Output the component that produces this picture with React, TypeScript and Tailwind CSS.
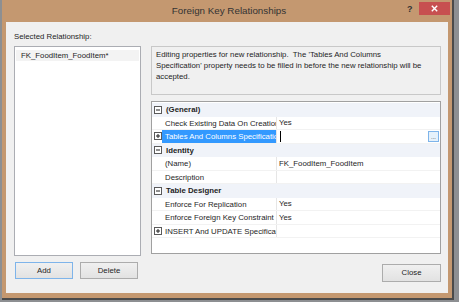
import React from 'react';

type Row =
  | { kind: 'cat'; label: string }
  | { kind: 'item'; label: string; value?: string; expand?: boolean; selected?: boolean; ellipsis?: boolean };

const rows: Row[] = [
  { kind: 'cat', label: '(General)' },
  { kind: 'item', label: 'Check Existing Data On Creation Or Re-Enabling', value: 'Yes' },
  { kind: 'item', label: 'Tables And Columns Specification', expand: true, selected: true, ellipsis: true },
  { kind: 'cat', label: 'Identity' },
  { kind: 'item', label: '(Name)', value: 'FK_FoodItem_FoodItem' },
  { kind: 'item', label: 'Description' },
  { kind: 'cat', label: 'Table Designer' },
  { kind: 'item', label: 'Enforce For Replication', value: 'Yes' },
  { kind: 'item', label: 'Enforce Foreign Key Constraint', value: 'Yes' },
  { kind: 'item', label: 'INSERT And UPDATE Specification', expand: true },
];

const Glyph: React.FC<{ open: boolean }> = ({ open }) => (
  <svg width="8" height="8" viewBox="0 0 8 8" className="block">
    <rect x="0.5" y="0.5" width="7" height="7" fill="#ffffff" stroke="#5a5a5a" />
    <line x1="2" y1="4" x2="6" y2="4" stroke="#1e1e1e" />
    {!open && <line x1="4" y1="2" x2="4" y2="6" stroke="#1e1e1e" />}
  </svg>
);

const Button: React.FC<{ label: string; focused?: boolean; className?: string }> = ({ label, focused, className }) => (
  <div
    className={`flex items-center justify-center border bg-gradient-to-b from-[#f0f0f0] to-[#e2e2e2] text-[#1e1e1e] ${
      focused ? 'border-[#7eb4ea]' : 'border-[#acacac]'
    } ${className ?? ''}`}
  >
    {label}
  </div>
);

export default function App() {
  return (
    <div className="w-[459px] h-[302px] bg-[#8d8f92] overflow-hidden font-['Liberation_Sans',Arial,sans-serif] text-[7.8px] text-[#1e1e1e]">
      <div className="ml-[2px] w-[452px] h-[300px] bg-[#c49870] border-r-2 border-b-2 border-[#4a4a4a] flex flex-col">
        {/* Title bar */}
        <div className="relative h-[22px] flex items-center justify-center">
          <span className="text-[9.8px] text-[#333333] ml-[4px]">Foreign Key Relationships</span>
          <span className="absolute left-[405px] top-[3px] text-[9px] font-bold text-[#333333]">?</span>
          <div className="absolute left-[417px] top-[2px] w-[31px] h-[13px] bg-[#c75050] flex items-center justify-center">
            <svg width="7" height="7" viewBox="0 0 7 7">
              <path d="M0.8 0.8 L6.2 6.2 M6.2 0.8 L0.8 6.2" stroke="#ffffff" strokeWidth="1.4" />
            </svg>
          </div>
        </div>

        {/* Client area */}
        <div className="ml-[4px] w-[442px] h-[271px] bg-[#f0f0f0] flex pl-[8px] pt-[9px]">
          {/* Left column */}
          <div className="w-[127px] flex flex-col">
            <div className="h-[15px] leading-[11px]">Selected Relationship:</div>
            <div className="h-[210px] bg-white border border-[#abadb3] pt-[3px] px-[1px]">
              <div className="h-[11px] leading-[11px] pl-[5px] bg-[#f3f3f3]">FK_FoodItem_FoodItem*</div>
            </div>
            <div className="flex gap-[7px] mt-[6px] ml-[1px]">
              <Button label="Add" focused className="w-[58px] h-[17px]" />
              <Button label="Delete" className="w-[58px] h-[17px]" />
            </div>
          </div>

          {/* Right column */}
          <div className="ml-[10px] w-[290px] flex flex-col pt-[15px]">
            <div className="h-[49px] border border-[#c8c8c8] bg-[#f0f0f0] px-[4px] pt-[2px] leading-[11px]">
              Editing properties for new relationship.&nbsp; The 'Tables And Columns
              <br />
              Specification' property needs to be filled in before the new relationship will be
              <br />
              accepted.
            </div>

            <div className="mt-[6px] h-[153px] border border-[#a0a0a0] bg-white pt-[1px]">
              {rows.map((row, i) =>
                row.kind === 'cat' ? (
                  <div key={i} className="flex h-[13.5px] leading-[13.5px] bg-[#f0f3f9]">
                    <div className="w-[9px] flex items-center justify-center ml-[1px]">
                      <Glyph open />
                    </div>
                    <div className="pl-[4px] font-bold whitespace-nowrap">{row.label}</div>
                  </div>
                ) : (
                  <div key={i} className="flex h-[13.5px] leading-[13.5px] border-b border-[#f2f2f2]">
                    <div className="w-[9px] flex items-center justify-center ml-[1px]">
                      {row.expand && <Glyph open={false} />}
                    </div>
                    <div
                      className={`w-[114px] overflow-hidden whitespace-nowrap pl-[3px] ${
                        row.selected ? 'bg-[#3399ff] text-white' : ''
                      }`}
                    >
                      {row.label}
                    </div>
                    <div className="flex-1 flex items-center border-l border-[#e6e6e6] pl-[2px] pr-[1px] whitespace-nowrap">
                      {row.selected && <div className="w-[1px] h-[11px] bg-black ml-[1px]" />}
                      {row.value && <span>{row.value}</span>}
                      {row.ellipsis && (
                        <div className="ml-auto w-[11px] h-[11px] border border-[#7eb4ea] bg-[#e5f1fb] flex items-end justify-center text-[6px] leading-[7px]">
                          ...
                        </div>
                      )}
                    </div>
                  </div>
                )
              )}
            </div>

            <div className="flex justify-end mt-[10px]">
              <Button label="Close" className="w-[59px] h-[18px]" />
            </div>
          </div>
        </div>
      </div>
    </div>
  );
}
